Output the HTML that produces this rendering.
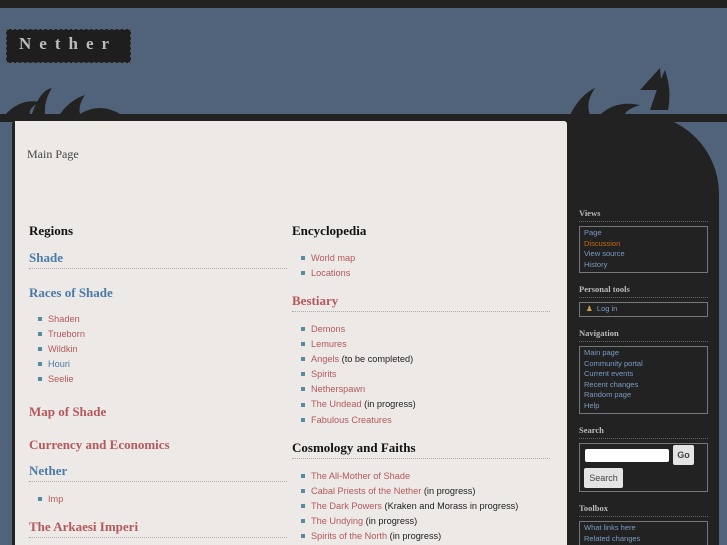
<!DOCTYPE html>
<html><head><style>
html,body{margin:0;width:727px;height:545px;overflow:hidden}
body{background:#50637a;font-family:"Liberation Sans",sans-serif;position:relative}
.a{position:absolute}
.r{color:#b4585c}.b{color:#4a7aa8}
h{display:block;position:absolute;font-family:"Liberation Serif",serif;font-weight:bold;font-size:13px;white-space:nowrap}
.hr{position:absolute;border-top:1px dotted #aaa;height:0}
ul{position:absolute;margin:0;padding:0;list-style:none;font-size:9.2px;line-height:15.1px;white-space:nowrap;color:#222}
li:before{content:"";display:inline-block;width:4px;height:4px;background:#5a8aa0;margin:0 6px 1px 0;vertical-align:middle}
.sb{position:absolute;left:579px;width:129px;border:1px solid #777;font-size:7.5px;line-height:10.5px;color:#7a9cc6;padding:1px 0 1px 4px;box-sizing:border-box}
.st{position:absolute;left:579px;color:#bbb;font-family:"Liberation Serif",serif;font-weight:bold;font-size:8.5px;width:129px;border-bottom:1px dotted #666;padding-bottom:3px}
</style></head><body>
<div class="a" style="left:0;top:0;width:727px;height:8px;background:#222"></div>
<div class="a" style="left:6px;top:29px;width:123px;height:32px;background:#1e1e1e;border:1px dashed #555"></div>
<div class="a" style="left:19px;top:34px;font-family:'Liberation Serif',serif;font-weight:bold;font-size:17px;letter-spacing:8px;color:#bbb">Nether</div>
<div class="a" style="left:0;top:114px;width:727px;height:8px;background:#222"></div>
<svg class="a" style="left:0;top:60px" width="727" height="60">
<path d="M5 55 Q20 38 40 42 Q28 48 30 55 Z M32 54 Q40 30 52 28 Q44 40 45 54 Z M60 54 Q70 40 85 35 Q78 45 80 54 Z M80 54 Q100 42 120 54 Z" fill="#222"/>
<path d="M570 55 Q580 35 595 28 Q585 42 590 55 Z M600 55 Q615 40 640 45 Q625 50 625 55 Z M650 50 Q660 20 665 10 Q672 30 668 50 Z M640 30 L660 8 L662 30 Z" fill="#222"/>
</svg>
<div class="a" style="left:565px;top:114px;width:154px;height:440px;background:#222;border-radius:0 80px 0 0"></div>
<div class="a" style="left:12px;top:121px;width:552px;height:430px;background:#ede9e6;border-left:3px solid #222;border-radius:3px 3px 0 0"></div>
<div class="a" style="left:27px;top:147px;font-family:'Liberation Serif',serif;font-size:12px;color:#444">Main Page</div>

<h style="left:29px;top:223px;color:#111">Regions</h>
<h class="b" style="left:29px;top:250px">Shade</h>
<div class="hr" style="left:29px;top:268px;width:258px"></div>
<h class="b" style="left:29px;top:285px">Races of Shade</h>
<ul style="left:38px;top:312px"><li><span class="r">Shaden</span></li><li><span class="r">Trueborn</span></li><li><span class="r">Wildkin</span></li><li><span class="b">Houri</span></li><li><span class="r">Seelie</span></li></ul>
<h class="r" style="left:29px;top:404px">Map of Shade</h>
<h class="r" style="left:29px;top:437px">Currency and Economics</h>
<h class="b" style="left:29px;top:463px">Nether</h>
<div class="hr" style="left:29px;top:481px;width:258px"></div>
<ul style="left:38px;top:492px"><li><span class="r">Imp</span></li></ul>
<h class="r" style="left:29px;top:519px">The Arkaesi Imperi</h>
<div class="hr" style="left:29px;top:537px;width:258px"></div>

<h style="left:292px;top:223px;color:#111">Encyclopedia</h>
<ul style="left:301px;top:251px"><li><span class="r">World map</span></li><li><span class="r">Locations</span></li></ul>
<h class="r" style="left:292px;top:293px">Bestiary</h>
<div class="hr" style="left:292px;top:311px;width:258px"></div>
<ul style="left:301px;top:322px"><li><span class="r">Demons</span></li><li><span class="r">Lemures</span></li><li><span class="r">Angels</span> (to be completed)</li><li><span class="r">Spirits</span></li><li><span class="r">Netherspawn</span></li><li><span class="r">The Undead</span> (in progress)</li><li><span class="r">Fabulous Creatures</span></li></ul>
<h style="left:292px;top:440px;color:#111">Cosmology and Faiths</h>
<div class="hr" style="left:292px;top:458px;width:258px"></div>
<ul style="left:301px;top:469px"><li><span class="r">The All-Mother of Shade</span></li><li><span class="r">Cabal Priests of the Nether</span> (in progress)</li><li><span class="r">The Dark Powers</span> (Kraken and Morass in progress)</li><li><span class="r">The Undying</span> (in progress)</li><li><span class="r">Spirits of the North</span> (in progress)</li></ul>

<div class="st" style="top:208px">Views</div>
<div class="sb" style="top:226px;height:47px"><div>Page</div><div style="color:#c66a10">Discussion</div><div>View source</div><div>History</div></div>
<div class="st" style="top:284px">Personal tools</div>
<div class="sb" style="top:302px;height:15px;padding-left:6px"><span style="color:#c9a040">&#9823;</span>&nbsp; Log in</div>
<div class="st" style="top:328px">Navigation</div>
<div class="sb" style="top:346px;height:68px"><div>Main page</div><div>Community portal</div><div>Current events</div><div>Recent changes</div><div>Random page</div><div>Help</div></div>
<div class="st" style="top:425px">Search</div>
<div class="sb" style="top:443px;height:49px"></div>
<div class="a" style="left:585px;top:449px;width:84px;height:13px;background:#fff;border-radius:2px"></div>
<div class="a" style="left:673px;top:445px;width:21px;height:20px;background:#e4e4e4;border-radius:2px;font-size:9px;font-weight:bold;color:#444;text-align:center;line-height:20px">Go</div>
<div class="a" style="left:584px;top:468px;width:39px;height:20px;background:#e4e4e4;border-radius:2px;font-size:9px;color:#444;text-align:center;line-height:20px">Search</div>
<div class="st" style="top:503px">Toolbox</div>
<div class="sb" style="top:521px;height:30px"><div>What links here</div><div>Related changes</div></div>
</body></html>
